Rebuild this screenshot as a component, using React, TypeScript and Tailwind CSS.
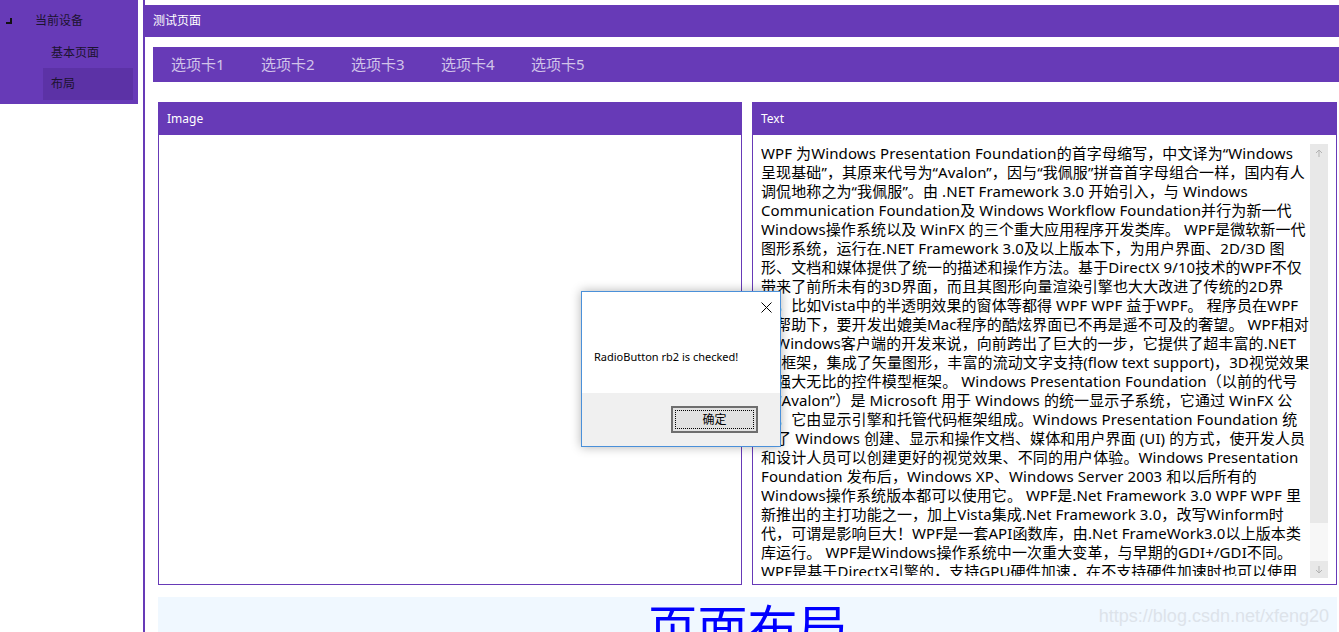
import React from 'react';

const FONT = { fontFamily: '"Noto Sans", "Noto Sans CJK SC", sans-serif' };

const tabs = ['选项卡1', '选项卡2', '选项卡3', '选项卡4', '选项卡5'];

// lines are broken where the reference wraps them
const lines = [
  'WPF 为Windows Presentation Foundation的首字母缩写，中文译为“Windows',
  '呈现基础”，其原来代号为“Avalon”，因与“我佩服”拼音首字母组合一样，国内有人',
  '调侃地称之为“我佩服”。由 .NET Framework 3.0 开始引入，与 Windows',
  'Communication Foundation及 Windows Workflow Foundation并行为新一代',
  'Windows操作系统以及 WinFX 的三个重大应用程序开发类库。 WPF是微软新一代',
  '图形系统，运行在.NET Framework 3.0及以上版本下，为用户界面、2D/3D 图',
  '形、文档和媒体提供了统一的描述和操作方法。基于DirectX 9/10技术的WPF不仅',
  '带来了前所未有的3D界面，而且其图形向量渲染引擎也大大改进了传统的2D界',
  '面，比如Vista中的半透明效果的窗体等都得 WPF WPF 益于WPF。 程序员在WPF',
  '的帮助下，要开发出媲美Mac程序的酷炫界面已不再是遥不可及的奢望。 WPF相对',
  '于Windows客户端的开发来说，向前跨出了巨大的一步，它提供了超丰富的.NET',
  'UI 框架，集成了矢量图形，丰富的流动文字支持(flow text support)，3D视觉效果',
  '和强大无比的控件模型框架。 Windows Presentation Foundation（以前的代号',
  '为“Avalon”）是 Microsoft 用于 Windows 的统一显示子系统，它通过 WinFX 公',
  '开，它由显示引擎和托管代码框架组成。Windows Presentation Foundation 统',
  '一了 Windows 创建、显示和操作文档、媒体和用户界面 (UI) 的方式，使开发人员',
  '和设计人员可以创建更好的视觉效果、不同的用户体验。Windows Presentation',
  'Foundation 发布后，Windows XP、Windows Server 2003 和以后所有的',
  'Windows操作系统版本都可以使用它。 WPF是.Net Framework 3.0 WPF WPF 里',
  '新推出的主打功能之一，加上Vista集成.Net Framework 3.0，改写Winform时',
  '代，可谓是影响巨大！WPF是一套API函数库，由.Net FrameWork3.0以上版本类',
  '库运行。 WPF是Windows操作系统中一次重大变革，与早期的GDI+/GDI不同。',
  'WPF是基于DirectX引擎的，支持GPU硬件加速，在不支持硬件加速时也可以使用',
];

function Sidebar() {
  return (
    <div className="w-[138px] h-[104px] bg-[#673ab7] pt-[5px] text-[12px] text-[#1c1330] shrink-0">
      <div className="h-[32px] flex items-center">
        <svg width="6" height="6" viewBox="0 0 6 6" className="ml-[6px] mr-[23px]">
          <path d="M5 0 V5 H0" fill="none" stroke="#111" strokeWidth="2" />
        </svg>
        <span>当前设备</span>
      </div>
      <div className="h-[31px] flex items-center pl-[51px]">基本页面</div>
      <div className="ml-[43px] w-[90px] h-[32px] bg-[#5c32a6] flex items-center pl-[8px]">布局</div>
    </div>
  );
}

function TextPanel() {
  return (
    <div className="w-[585px] h-[483px] border border-[#673ab7] flex flex-col">
      <div className="h-[32px] bg-[#673ab7] text-white text-[12px] flex items-center pl-[8px] shrink-0">Text</div>
      <div className="flex-1 flex pt-[9px] pb-[6px] pl-[8px] pr-[8px] min-h-0">
        <div className="flex-1 overflow-hidden text-[15px] leading-[19px] tracking-[0.1px] text-black mb-[2px]">
          {lines.map((l, i) => (
            <div key={i} className="whitespace-nowrap">{l}</div>
          ))}
        </div>
        <div className="w-[18px] flex flex-col bg-[#f7f7f7]">
          <div className="h-[17px] bg-[#e8e8e8] flex items-center justify-center text-[#b3b3b3]">
            <svg width="8" height="8" viewBox="0 0 8 8"><path d="M4 8 V1 M1 4 L4 1 L7 4" fill="none" stroke="currentColor" strokeWidth="1" /></svg>
          </div>
          <div className="h-[362px] bg-[#e8e8e8]" />
          <div className="flex-1" />
          <div className="h-[17px] bg-[#e8e8e8] flex items-center justify-center text-[#b3b3b3]">
            <svg width="8" height="8" viewBox="0 0 8 8"><path d="M4 0 V7 M1 4 L4 7 L7 4" fill="none" stroke="currentColor" strokeWidth="1" /></svg>
          </div>
        </div>
      </div>
    </div>
  );
}

function MessageBox() {
  return (
    <div className="absolute left-[581px] top-[291px] w-[200px] h-[156px] border border-[#4a90d9] bg-white shadow-[0_0_10px_rgba(0,0,0,0.3)] flex flex-col text-[12px]">
      <div className="h-[101px] relative">
        <svg width="11" height="11" viewBox="0 0 11 11" className="absolute left-[179px] top-[10px]">
          <path d="M0.5 0.5 L10.5 10.5 M10.5 0.5 L0.5 10.5" stroke="#000" strokeWidth="1" />
        </svg>
        <div className="absolute left-[12px] top-[59px] text-[11px] text-black leading-none">RadioButton rb2 is checked!</div>
      </div>
      <div className="flex-1 bg-[#f0f0f0] flex justify-end pr-[22px] pt-[13px]">
        <div className="w-[87px] h-[27px] border-2 border-[#6e6e6e] bg-[#e1e1e1] p-[2px]">
          <div className="w-full h-full border border-dotted border-black flex items-center justify-center text-black">确定</div>
        </div>
      </div>
    </div>
  );
}

export default function App() {
  return (
    <div className="relative w-[1339px] h-[632px] overflow-hidden bg-white flex" style={FONT}>
      <Sidebar />
      <div className="ml-[5px] flex-1 border-l-2 border-[#673ab7] flex flex-col">
        <div className="mt-[5px] h-[32px] shrink-0 bg-[#673ab7] text-white text-[12px] flex items-center pl-[8px]">测试页面</div>
        <div className="mt-[10px] ml-[8px] h-[35px] shrink-0 bg-[#673ab7] flex items-center text-[15px] text-[#d1c4e9]">
          {tabs.map((t) => (
            <div key={t} className="w-[90px] pl-[18px]">{t}</div>
          ))}
        </div>
        <div className="mt-[20px] ml-[13px] flex gap-[10px] shrink-0">
          <div className="w-[584px] h-[483px] border border-[#673ab7] flex flex-col">
            <div className="h-[32px] bg-[#673ab7] text-white text-[12px] flex items-center pl-[8px]">Image</div>
            <div className="flex-1" />
          </div>
          <TextPanel />
        </div>
        <div className="mt-[12px] ml-[13px] mr-[2px] flex-1 min-h-0 overflow-hidden bg-[#f0f8ff] relative flex justify-center">
          <div className="text-[50px] leading-none text-[#0000ff] mt-[6px]">页面布局</div>
          <div className="absolute right-[8px] top-[6px] text-[18px] text-[#dde3ea]" style={{ fontFamily: '"Liberation Sans", sans-serif' }}>https://blog.csdn.net/xfeng20</div>
        </div>
      </div>
      <MessageBox />
    </div>
  );
}
